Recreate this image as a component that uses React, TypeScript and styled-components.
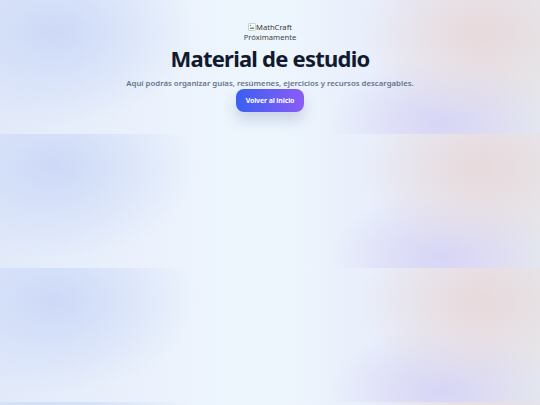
import React from "react";
import styled, { createGlobalStyle } from "styled-components";

const Global = createGlobalStyle`
  html, body { margin: 0; padding: 0; }
  body {
    font-family: "Noto Sans", "Open Sans", sans-serif;
    background-color: #ebf2fc;
    background-image:
      radial-gradient(ellipse 140px 95px at 10% 24%, rgba(203, 216, 247, 0.95), rgba(203, 216, 247, 0) 100%),
      radial-gradient(ellipse 120px 85px at 89% 25%, rgba(232, 218, 220, 1), rgba(232, 218, 220, 0) 100%),
      radial-gradient(ellipse 115px 65px at 82% 92%, rgba(215, 213, 245, 1), rgba(215, 213, 245, 0) 100%),
      linear-gradient(90deg, #e2eafa 0%, #eaf1fc 25%, #eef6fd 50%, #e8eefb 70%, #e6e7f0 90%, #e5e8ec 100%);
    background-size: 100% 134px;
    background-repeat: repeat;
    min-height: 405px;
  }
`;

const Hero = styled.main`
  display: flex;
  flex-direction: column;
  align-items: center;
  padding: 22px 16px 22px;
  text-align: center;
`;

const Logo = styled.div`
  display: flex;
  align-items: center;
  font-family: "Noto Sans", sans-serif;
  font-size: 7.6px;
  line-height: 10px;
  color: #3a3a3a;
`;

const Soon = styled.div`
  font-family: "Noto Sans", sans-serif;
  font-size: 7.6px;
  line-height: 10px;
  color: #444;
`;

const Title = styled.h1`
  margin: 1px 0 0;
  font-size: 22px;
  line-height: 30px;
  font-weight: 700;
  letter-spacing: -0.035em;
  color: #111a2e;
`;

const Subtitle = styled.p`
  margin: 4px 0 0;
  font-size: 7.8px;
  line-height: 12px;
  font-weight: 600;
  color: #66758c;
`;

const Button = styled.a`
  display: inline-flex;
  align-items: center;
  justify-content: center;
  width: 68px;
  height: 23px;
  margin-top: 0;
  border-radius: 8px;
  background: linear-gradient(90deg, #3b5ff0 0%, #8b5cf6 100%);
  color: #fff;
  font-size: 7px;
  font-weight: 700;
  letter-spacing: -0.02em;
  text-decoration: none;
  box-shadow: 0 8px 14px rgba(60, 80, 140, 0.2);
`;

const BrokenIcon = () => (
  <svg width="8" height="8" viewBox="0 0 16 16">
    <rect x="1.5" y="1.5" width="13" height="13" fill="#fff" stroke="#aaa" />
    <path d="M3 12 L6 8 L8 10 L10 7 L13 12 Z" fill="#6a9e5a" />
    <circle cx="5" cy="5" r="1.4" fill="#5a8ed0" />
  </svg>
);

export default function App() {
  return (
    <>
      <Global />
      <Hero>
        <Logo>
          <BrokenIcon />
          <span>MathCraft</span>
        </Logo>
        <Soon>Próximamente</Soon>
        <Title>Material de estudio</Title>
        <Subtitle>Aquí podrás organizar guías, resúmenes, ejercicios y recursos descargables.</Subtitle>
        <Button href="#">Volver al inicio</Button>
      </Hero>
    </>
  );
}
